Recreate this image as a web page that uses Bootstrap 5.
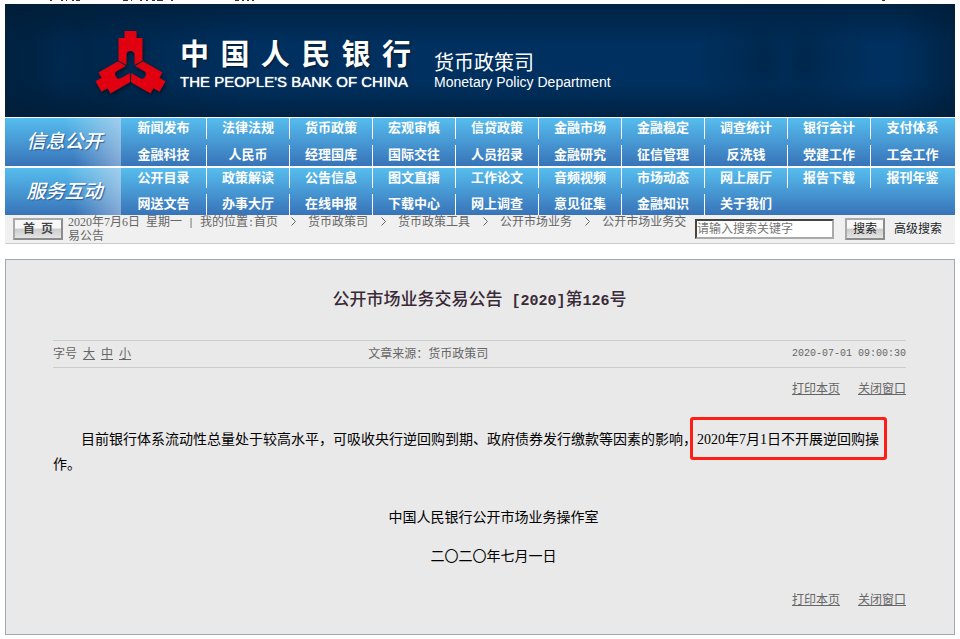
<!DOCTYPE html>
<html lang="zh-CN">
<head>
<meta charset="utf-8">
<meta name="viewport" content="width=device-width, initial-scale=1">
<title>公开市场业务交易公告 [2020]第126号</title>
<link rel="stylesheet" href="https://cdn.jsdelivr.net/npm/bootstrap@5.3.0/dist/css/bootstrap.min.css">
<style>
body { font-family: "Liberation Serif", "Noto Sans CJK SC", sans-serif; font-size: 12px; line-height: 14px; color: #666; background: #fff; }
.page { padding: 0 5px 4px; }
.edge { display: block; width: 880px; height: 4px; }
a { color: inherit; }
.masthead {
  padding: 26px 90px 22px 90px; margin-bottom: 1px; gap: 14px; color: #fff;
  background:
    radial-gradient(ellipse 20px 40px at 82% 50%, rgba(0,55,110,.3), transparent),
    radial-gradient(ellipse 90px 60px at 82% 50%, rgba(0,32,60,.65), transparent),
    radial-gradient(ellipse 24px 44px at 6% 50%, rgba(0,55,110,.25), transparent),
    linear-gradient(90deg, rgba(0,28,52,.7), transparent 26%, transparent 94%, rgba(0,28,52,.6)),
    linear-gradient(#002242, #00305f 35%, #00305f 70%, #002344);
}
.logo { width: 71px; height: 65px; filter: drop-shadow(1px 2px 2px rgba(0,0,0,.5)); }
.brand { width: 231px; margin-right: 3px; padding-top: 8px; }
.brand-cn { font-size: 29px; line-height: 35px; font-weight: 700; text-shadow: 1px 1px 2px rgba(0,0,0,.5); }
.brand-en { font: 15px/18px "Liberation Sans", sans-serif; white-space: nowrap; text-shadow: 0 0 1px #fff; }
.dept { margin-left: 6px; padding-top: 22px; }
.dept-cn { font-size: 20px; line-height: 22px; }
.dept-en { font: 14px/16px "Liberation Sans", sans-serif; white-space: nowrap; }
.band { background: linear-gradient(#56bdee, #3873b8); color: #fff; }
.band + .band { margin-top: 2px; }
.band-title { width: 116px; padding-left: 3px; font-size: 19px; font-style: italic; font-weight: 500; background: linear-gradient(75deg, transparent 55%, rgba(200,215,235,.65)); text-shadow: 1px 1px 1px #2a5f9c; }
.menu { display: grid; grid-template-columns: 86fr repeat(8, 83fr) 84fr; grid-template-rows: 21px 21px; row-gap: 6px; }
.band + .band .menu { grid-template-rows: 20px 21px; }
.menu a { font-size: 13px; font-weight: 700; line-height: 20px; text-align: center; text-decoration: none; border-right: 1px solid #fff; }
.menu a:nth-child(10n), .menu a:last-child { border-right-color: transparent; }
.toolbar { background: #f0f0f0; border-bottom: 1px solid #ccc; padding: 0 13px 0 8px; height: 29px; }
.btn-box { border: 2px solid #8c8c8c; border-top-color: #aaa; border-left-color: #aaa; border-radius: 0; padding: 0; line-height: 18px; font-size: 12px; color: #222; background: linear-gradient(#f8f8f8 45%, #ccc 50%, #e4e4e4); }
.btn-home { width: 50px; font-weight: 700; color: #444; }
.btn-search { width: 40px; margin: 0 9px 0 11px; }
.crumbs { flex: 1 1 0; min-width: 0; padding: 0 8px 0 5px; }
.crumbs a { text-decoration: none; }
.half { font: 10px/8px "Liberation Mono", monospace; white-space: pre; }
.chevron { display: inline-block; width: 30px; text-align: center; line-height: 12px; }
.chevron svg { width: 5px; height: 9px; vertical-align: baseline; }
.search-box { width: 139px; height: 20px; padding: 0; border: 2px solid #aaa; border-top-color: #444; border-left-color: #444; border-radius: 0; font-family: inherit; font-size: 12px; line-height: 16px; background: #fff; }
.search-box::placeholder { color: #757575; opacity: 1; }
.article { margin-top: 15px; padding: 27px 48px 24px 47px; border: 1px solid #a0a8b2; background: #e9e9e9; }
.article h1 { font-size: 17px; line-height: 26px; font-weight: 500; color: #3a2a38; margin-bottom: 27px; text-align: center; }
.title-latin { font: 700 15px "Liberation Mono", monospace; white-space: pre; }
.meta { border-top: 1px solid #ccc; border-bottom: 1px solid #ccc; line-height: 26px; }
.size-links { width: 24%; gap: 6px; }
.source { width: 40%; }
.stamp { font: 10px/26px "Liberation Mono", monospace; }
.tools { gap: 18px; line-height: 20px; }
.meta + .tools { margin-top: 11px; }
.copy { font-size: 14px; line-height: 25px; color: #000; text-indent: 28px; padding: 28px 0 21px; }
.copy p { margin-bottom: 14px; }
.copy p:first-child { margin-bottom: 28px; }
.copy p:last-child { margin-bottom: 0; }
.marked { position: relative; text-indent: 0; }
.marked::after { content: ""; position: absolute; inset: -15px -8px -13px -7px; border: 3px solid #ff1e14; border-radius: 3px; }
</style>
</head>
<body>
<div class="page">
  <svg class="edge" viewBox="0 0 880 4" aria-hidden="true"><path d="M45 .5h2m9 0h2m3 0h1m5 0h2m2 0h4m43 0h5m3 0h1m8 0h2m4 0h2m4 0h3m2 0h6m8 0h2m62 0h4m3 0h2m3 0h2m3 0h2m628 0h3" stroke="#333" fill="none"/></svg>
  <header class="masthead d-flex">
    <svg class="logo flex-shrink-0" viewBox="-35.5 -38 71 65" aria-hidden="true">
      <defs><path id="arm" d="M-6-37H6V-30H12V-7.500L4-3V-13A4 4 0 0 0-4-13V-3L-12-7.500V-30H-6Z"/></defs>
      <g fill="#e1000f"><use href="#arm"/><use href="#arm" transform="rotate(120)"/><use href="#arm" transform="rotate(240)"/></g>
    </svg>
    <div class="brand">
      <div class="brand-cn d-flex justify-content-between"><span>中</span><span>国</span><span>人</span><span>民</span><span>银</span><span>行</span></div>
      <div class="brand-en">THE PEOPLE'S BANK OF CHINA</div>
    </div>
    <div class="dept"><div class="dept-cn">货币政策司</div><div class="dept-en">Monetary Policy Department</div></div>
  </header>

  <nav>
    <div class="band d-flex">
      <div class="band-title d-flex align-items-center justify-content-center flex-shrink-0">信息公开</div>
      <div class="menu flex-grow-1">
        <a href="#">新闻发布</a><a href="#">法律法规</a><a href="#">货币政策</a><a href="#">宏观审慎</a><a href="#">信贷政策</a><a href="#">金融市场</a><a href="#">金融稳定</a><a href="#">调查统计</a><a href="#">银行会计</a><a href="#">支付体系</a>
        <a href="#">金融科技</a><a href="#">人民币</a><a href="#">经理国库</a><a href="#">国际交往</a><a href="#">人员招录</a><a href="#">金融研究</a><a href="#">征信管理</a><a href="#">反洗钱</a><a href="#">党建工作</a><a href="#">工会工作</a>
      </div>
    </div>
    <div class="band d-flex">
      <div class="band-title d-flex align-items-center justify-content-center flex-shrink-0">服务互动</div>
      <div class="menu flex-grow-1">
        <a href="#">公开目录</a><a href="#">政策解读</a><a href="#">公告信息</a><a href="#">图文直播</a><a href="#">工作论文</a><a href="#">音频视频</a><a href="#">市场动态</a><a href="#">网上展厅</a><a href="#">报告下载</a><a href="#">报刊年鉴</a>
        <a href="#">网送文告</a><a href="#">办事大厅</a><a href="#">在线申报</a><a href="#">下载中心</a><a href="#">网上调查</a><a href="#">意见征集</a><a href="#">金融知识</a><a href="#">关于我们</a>
      </div>
    </div>
  </nav>

  <form class="toolbar d-flex align-items-center">
    <button type="button" class="btn btn-box btn-home">首&nbsp; 页</button>
    <div class="crumbs">2020年7月6日&nbsp; 星期一<span class="half"> | </span><a href="#">我的位置<span class="half">:</span>首页</a><span class="chevron"><svg viewBox="0 0 5 9"><path d="M.5.5l4 4-4 4" fill="none" stroke="#666"/></svg></span><a href="#">货币政策司</a><span class="chevron"><svg viewBox="0 0 5 9"><path d="M.5.5l4 4-4 4" fill="none" stroke="#666"/></svg></span><a href="#">货币政策工具</a><span class="chevron"><svg viewBox="0 0 5 9"><path d="M.5.5l4 4-4 4" fill="none" stroke="#666"/></svg></span><a href="#">公开市场业务</a><span class="chevron"><svg viewBox="0 0 5 9"><path d="M.5.5l4 4-4 4" fill="none" stroke="#666"/></svg></span><a href="#">公开市场业务交易公告</a></div>
    <input class="search-box form-control" type="text" placeholder="请输入搜索关键字" aria-label="请输入搜索关键字">
    <button type="submit" class="btn btn-box btn-search">搜索</button>
    <a href="#" class="text-dark text-decoration-none">高级搜索</a>
  </form>

  <main class="article">
    <h1>公开市场业务交易公告<span class="title-latin"> [2020]</span>第<span class="title-latin">126</span>号</h1>
    <div class="meta d-flex">
      <div class="d-flex size-links"><span>字号</span><a href="#">大</a><a href="#">中</a><a href="#">小</a></div>
      <div class="source text-center">文章来源：货币政策司</div>
      <div class="flex-grow-1 text-end stamp">2020-07-01 09:00:30</div>
    </div>
    <div class="tools d-flex justify-content-end"><a href="#">打印本页</a><a href="#">关闭窗口</a></div>
    <div class="copy">
      <p>目前银行体系流动性总量处于较高水平，可吸收央行逆回购到期、政府债券发行缴款等因素的影响，<span class="marked">2020年7月1日不开展逆回购操</span>作。</p>
      <p class="text-center">中国人民银行公开市场业务操作室</p>
      <p class="text-center">二〇二〇年七月一日</p>
    </div>
    <div class="tools d-flex justify-content-end"><a href="#">打印本页</a><a href="#">关闭窗口</a></div>
  </main>
</div>
<script src="https://cdn.jsdelivr.net/npm/bootstrap@5.3.0/dist/js/bootstrap.bundle.min.js"></script>
</body>
</html>
